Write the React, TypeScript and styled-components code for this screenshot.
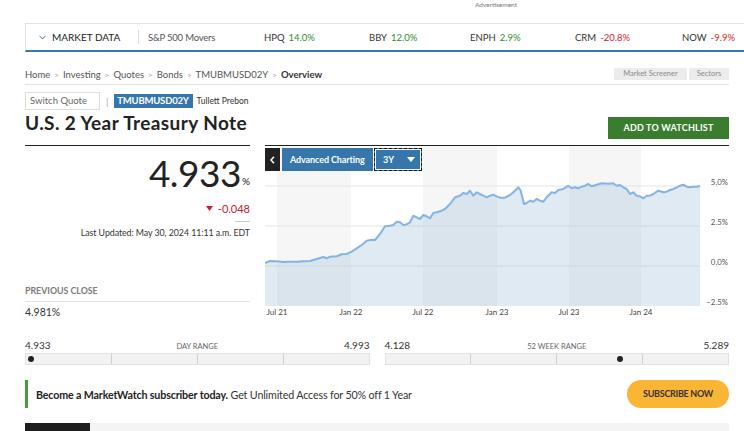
import React from "react";
import styled, { createGlobalStyle } from "styled-components";

const Global = createGlobalStyle`
  html, body { margin: 0; padding: 0; background: #fff; }
  body { font-family: Lato, "Open Sans", Arial, sans-serif; color: #222; overflow: hidden; }
  * { box-sizing: border-box; }
`;

const Page = styled.div`
  width: 744px;
  height: 431px;
  overflow: hidden;
`;

const Ad = styled.div`
  height: 23px;
  padding: 1px 0 0 475px;
  font-size: 6.5px;
  line-height: 8px;
  color: #777;
`;

const MarketBar = styled.div`
  margin-left: 25px;
  height: 29px;
  border-top: 1px solid #e3e3e3;
  border-left: 1px solid #e3e3e3;
  border-bottom: 2px solid #3a77ad;
  display: flex;
  align-items: center;
  padding-left: 13px;
  white-space: nowrap;
  overflow: hidden;
`;

const MarketTitle = styled.div`
  display: flex;
  align-items: center;
  gap: 6px;
  font-size: 10px;
  color: #222;
  width: 99px;
  flex-shrink: 0;
`;

const Divider = styled.div`
  width: 1px;
  height: 14px;
  background: #dcdcdc;
  margin: 0 9px 0 0;
  flex-shrink: 0;
`;

const Movers = styled.div`
  font-size: 9.5px;
  color: #555;
  width: 116px;
  flex-shrink: 0;
  letter-spacing: -0.2px;
`;

const Ticker = styled.div<{ $w: number }>`
  width: ${(p) => p.$w}px;
  flex-shrink: 0;
  font-size: 9.5px;
  color: #333;
`;

const Change = styled.span<{ $up: boolean }>`
  margin-left: 4px;
  color: ${(p) => (p.$up ? "#2f8c2f" : "#d2232a")};
`;

const Main = styled.div`
  margin-left: 25px;
  width: 704px;
`;

const Crumbs = styled.div`
  margin-top: 13px;
  height: 20px;
  border-bottom: 1px solid #e2e2e2;
  display: flex;
  align-items: center;
  justify-content: space-between;
`;

const CrumbTrail = styled.div`
  font-size: 9.5px;
  color: #555;
  display: flex;
  align-items: center;
  gap: 4px;
`;

const Sep = styled.span`
  color: #999;
  font-size: 8px;
`;

const Current = styled.span`
  font-weight: 700;
  color: #333;
`;

const Pills = styled.div`
  display: flex;
  gap: 2px;
  margin-top: -1px;
`;

const Pill = styled.div<{ $w: number }>`
  width: ${(p) => p.$w}px;
  height: 12px;
  background: #ececec;
  color: #8a8a8a;
  font-size: 7.5px;
  line-height: 12px;
  text-align: center;
`;

const QuoteRow = styled.div`
  margin-top: 7px;
  height: 18px;
  display: flex;
  align-items: center;
`;

const SwitchInput = styled.div`
  width: 75px;
  height: 18px;
  border: 1px solid #ddd;
  font-size: 9.5px;
  color: #666;
  line-height: 16px;
  padding-left: 4px;
`;

const Bar = styled.span`
  margin: 0 5px 0 6px;
  color: #aaa;
  font-size: 10px;
`;

const Badge = styled.div`
  height: 14px;
  width: 79px;
  background: #3676ab;
  color: #fff;
  font-weight: 700;
  font-size: 9.5px;
  line-height: 14px;
  text-align: center;
  letter-spacing: -0.2px;
`;

const Exchange = styled.div`
  margin-left: 4px;
  font-size: 8.5px;
  color: #333;
`;

const TitleRow = styled.div`
  display: flex;
  justify-content: space-between;
  align-items: flex-start;
  height: 29px;
`;

const Title = styled.h1`
  margin: 1px 0 0;
  font-size: 19px;
  line-height: 24px;
  font-weight: 700;
  letter-spacing: 0.4px;
  color: #222;
`;

const WatchButton = styled.div`
  margin-top: 7px;
  width: 121px;
  height: 22px;
  background: #3b7d2f;
  color: #fff;
  font-size: 9px;
  font-weight: 700;
  line-height: 22px;
  text-align: center;
  letter-spacing: 0.2px;
`;

const Columns = styled.div`
  margin-top: 6px;
  display: flex;
  gap: 15px;
`;

const LeftCol = styled.div`
  width: 225px;
  border-top: 1px solid #222;
  display: flex;
  flex-direction: column;
  align-items: flex-end;
`;

const Price = styled.div`
  margin-top: 8px;
  font-size: 37px;
  line-height: 37px;
  color: #222;
  letter-spacing: -0.5px;
`;

const Pct = styled.span`
  font-size: 10px;
  letter-spacing: 0;
  margin-left: 1px;
  position: relative;
  top: -2px;
`;

const Delta = styled.div`
  font-size: 11px;
  line-height: 13px;
  color: #c8202b;
  display: flex;
  align-items: center;
  gap: 5px;
`;

const SmallRule = styled.div`
  margin-top: 6px;
  width: 15px;
  height: 1px;
  background: #ccc;
`;

const Updated = styled.div`
  margin-top: 5px;
  font-size: 8.8px;
  line-height: 11px;
  color: #333;
  letter-spacing: -0.05px;
`;

const PrevBlock = styled.div`
  margin-top: auto;
  align-self: stretch;
`;

const PrevLabel = styled.div`
  font-size: 8.8px;
  line-height: 11px;
  color: #666;
  font-weight: 700;
  padding-bottom: 5px;
  border-bottom: 1px solid #ddd;
  opacity: 0.85;
`;

const PrevValue = styled.div`
  margin-top: 4px;
  font-size: 10.5px;
  line-height: 13px;
  color: #333;
`;

const ChartCol = styled.div`
  width: 464px;
  border-top: 1px solid #222;
  position: relative;
`;

const ChartSvg = styled.svg`
  display: block;
`;

const Toolbar = styled.div`
  position: absolute;
  top: 2px;
  left: 0;
  display: flex;
  height: 23px;
  gap: 2px;
`;

const BackBtn = styled.div`
  width: 15px;
  background: #222;
  display: flex;
  align-items: center;
  justify-content: center;
`;

const AdvBtn = styled.div`
  width: 91px;
  background: #3676ab;
  color: #fff;
  font-size: 9px;
  font-weight: 700;
  line-height: 23px;
  padding-left: 8px;
  letter-spacing: -0.1px;
`;

const RangeBtn = styled.div`
  width: 48px;
  margin-left: -1px;
  background: #3676ab;
  border: 1px dashed #111;
  outline: 1px solid #fff;
  outline-offset: -2px;
  color: #fff;
  font-size: 9px;
  font-weight: 700;
  display: flex;
  align-items: center;
  justify-content: space-between;
  padding: 0 6px 0 8px;
`;

const Ranges = styled.div`
  margin-top: 20px;
  display: flex;
  gap: 15px;
`;

const RangeBox = styled.div`
  flex: 1;
`;

const RangeHead = styled.div`
  display: flex;
  justify-content: space-between;
  align-items: baseline;
  height: 12px;
  font-size: 10px;
  line-height: 12px;
  color: #333;
`;

const RangeLabel = styled.span`
  font-size: 7.5px;
  color: #666;
`;

const Track = styled.div`
  margin-top: 2px;
  height: 12px;
  display: flex;
  border: 1px solid #e2e2e2;
  background: #f2f2f2;
  position: relative;
`;

const Seg = styled.div`
  flex: 1;
  & + & { border-left: 1px solid #cfcfcf; }
`;

const Dot = styled.div`
  position: absolute;
  top: 2px;
  width: 6px;
  height: 6px;
  margin-left: -3px;
  border-radius: 50%;
  background: #222;
`;

const Banner = styled.div`
  margin-top: 15px;
  height: 28px;
  display: flex;
  align-items: center;
  justify-content: space-between;
  border-left: 3px solid #4a9d3d;
  padding-left: 8px;
`;

const BannerText = styled.div`
  font-size: 10.7px;
  color: #333;
  letter-spacing: -0.15px;
`;

const Strong = styled.span`
  font-weight: 700;
  color: #222;
`;

const SubscribeBtn = styled.div`
  width: 102px;
  height: 28px;
  border-radius: 14px;
  background: #fbb535;
  color: #333;
  font-size: 9px;
  line-height: 28px;
  text-align: center;
  letter-spacing: -0.3px;
  font-weight: 700;
`;

const Footer = styled.div`
  margin-top: 15px;
  height: 20px;
  display: flex;
  background: #f4f4f4;
`;

const FooterTab = styled.div`
  width: 65px;
  background: #1e1e1e;
`;

const RAW: [number, number][] = [
  [15, 372], [30, 366], [50, 367], [70, 369], [90, 368], [110, 368], [130, 367], [150, 366],
  [170, 360], [190, 354], [200, 358], [210, 353], [230, 352], [245, 346], [260, 345], [275, 338],
  [290, 328], [305, 318], [320, 305], [335, 302], [345, 303], [360, 285], [375, 262], [390, 260],
  [400, 258], [410, 248], [420, 250], [430, 258], [440, 256], [450, 250], [460, 230], [470, 235],
  [480, 240], [490, 228], [500, 232], [510, 238], [520, 222], [530, 220], [545, 215], [555, 210],
  [570, 195], [585, 175], [600, 170], [610, 162], [620, 165], [630, 155], [640, 170], [650, 160],
  [660, 165], [670, 170], [680, 175], [690, 170], [700, 167], [710, 172], [720, 176], [735, 176],
  [750, 168], [760, 160], [770, 150], [775, 145], [782, 155], [792, 195], [800, 192], [810, 185],
  [820, 188], [830, 180], [840, 185], [850, 188], [860, 175], [875, 160], [885, 162], [895, 153],
  [910, 150], [925, 140], [935, 148], [945, 145], [955, 148], [965, 143], [975, 140], [985, 135],
  [995, 142], [1010, 137], [1025, 133], [1045, 134], [1060, 133], [1070, 140], [1080, 138],
  [1090, 145], [1100, 150], [1110, 165], [1120, 160], [1130, 170], [1140, 172], [1150, 178],
  [1160, 170], [1170, 170], [1180, 165], [1195, 155], [1210, 160], [1220, 158], [1230, 153],
  [1240, 150], [1250, 145], [1260, 140], [1270, 137], [1280, 143], [1290, 145], [1300, 143],
  [1310, 143], [1320, 141],
];

const PTS = RAW.map(([x, y]) => [x / 3 - 5, y / 3 - 7] as [number, number]);
const LINE = PTS.map(([x, y], i) => `${i ? "L" : "M"}${x.toFixed(1)},${y.toFixed(1)}`).join(" ");
const BOTTOM = 160;
const AREA = `${LINE} L${PTS[PTS.length - 1][0].toFixed(1)},${BOTTOM} L0,${BOTTOM} Z`;

const BANDS = [
  [12, 86],
  [158, 232],
  [304, 376],
];
const XLABELS: [number, string][] = [
  [12, "Jul 21"],
  [86, "Jan 22"],
  [158, "Jul 22"],
  [232, "Jan 23"],
  [304, "Jul 23"],
  [376, "Jan 24"],
];
const YLABELS: [number, string][] = [
  [40, "5.0%"],
  [80, "2.5%"],
  [120, "0.0%"],
  [160, "\u22122.5%"],
];

function Chart() {
  return (
    <ChartSvg width={464} height={173} viewBox="0 0 464 173">
      {BANDS.map(([a, b]) => (
        <rect key={a} x={a} y={0} width={b - a} height={BOTTOM} fill="#f6f6f6" />
      ))}
      {YLABELS.slice(0, 3).map(([y]) => (
        <line key={y} x1={0} x2={435} y1={y} y2={y} stroke="#e4e4e4" strokeWidth={1} />
      ))}
      <path d={AREA} fill="rgba(165,195,218,0.35)" />
      <path d={LINE} fill="none" stroke="#85b4e4" strokeWidth={2} strokeLinejoin="round" />
      {YLABELS.map(([y, t]) => (
        <text key={t} x={463} y={y - 1.5} textAnchor="end" fontSize={7.8} fill="#555" fontFamily="Lato, sans-serif">
          {t}
        </text>
      ))}
      {XLABELS.map(([x, t]) => (
        <text key={t} x={x} y={169} textAnchor="middle" fontSize={8} fill="#444" fontFamily="Lato, sans-serif">
          {t}
        </text>
      ))}
    </ChartSvg>
  );
}

function RangeBar({ low, high, value, label }: { low: string; high: string; value: number; label: string }) {
  const pct = (value - parseFloat(low)) / (parseFloat(high) - parseFloat(low));
  return (
    <RangeBox>
      <RangeHead>
        <span>{low}</span>
        <RangeLabel>{label}</RangeLabel>
        <span>{high}</span>
      </RangeHead>
      <Track>
        <Seg />
        <Seg />
        <Seg />
        <Seg />
        <Dot style={{ left: `calc(${(pct * 100).toFixed(2)}% * 0.965 + 5px)` }} />
      </Track>
    </RangeBox>
  );
}

const TICKERS = [
  { s: "HPQ", c: "14.0%", up: true, w: 105 },
  { s: "BBY", c: "12.0%", up: true, w: 101 },
  { s: "ENPH", c: "2.9%", up: true, w: 105 },
  { s: "CRM", c: "-20.8%", up: false, w: 107 },
  { s: "NOW", c: "-9.9%", up: false, w: 80 },
];

export default function App() {
  return (
    <Page>
      <Global />
      <Ad>Advertisement</Ad>
      <MarketBar>
        <MarketTitle>
          <svg width="7" height="5" viewBox="0 0 7 5">
            <path d="M0.5 0.8 L3.5 4 L6.5 0.8" fill="none" stroke="#3a77ad" strokeWidth="1" />
          </svg>
          MARKET DATA
        </MarketTitle>
        <Divider />
        <Movers>S&amp;P 500 Movers</Movers>
        {TICKERS.map((t) => (
          <Ticker key={t.s} $w={t.w}>
            {t.s}
            <Change $up={t.up}>{t.c}</Change>
          </Ticker>
        ))}
      </MarketBar>
      <Main>
        <Crumbs>
          <CrumbTrail>
            <span>Home</span>
            <Sep>&gt;</Sep>
            <span>Investing</span>
            <Sep>&gt;</Sep>
            <span>Quotes</span>
            <Sep>&gt;</Sep>
            <span>Bonds</span>
            <Sep>&gt;</Sep>
            <span>TMUBMUSD02Y</span>
            <Sep>&gt;</Sep>
            <Current>Overview</Current>
          </CrumbTrail>
          <Pills>
            <Pill $w={73}>Market Screener</Pill>
            <Pill $w={40}>Sectors</Pill>
          </Pills>
        </Crumbs>
        <QuoteRow>
          <SwitchInput>Switch Quote</SwitchInput>
          <Bar>|</Bar>
          <Badge>TMUBMUSD02Y</Badge>
          <Exchange>Tullett Prebon</Exchange>
        </QuoteRow>
        <TitleRow>
          <Title>U.S. 2 Year Treasury Note</Title>
          <WatchButton>ADD TO WATCHLIST</WatchButton>
        </TitleRow>
        <Columns>
          <LeftCol>
            <Price>
              4.933<Pct>%</Pct>
            </Price>
            <Delta>
              <svg width="7" height="5" viewBox="0 0 7 5">
                <path d="M0 0 H7 L3.5 5 Z" fill="#c8202b" />
              </svg>
              -0.048
            </Delta>
            <SmallRule />
            <Updated>Last Updated: May 30, 2024 11:11 a.m. EDT</Updated>
            <PrevBlock>
              <PrevLabel>PREVIOUS CLOSE</PrevLabel>
              <PrevValue>4.981%</PrevValue>
            </PrevBlock>
          </LeftCol>
          <ChartCol>
            <Chart />
            <Toolbar>
              <BackBtn>
                <svg width="5" height="8" viewBox="0 0 5 8">
                  <path d="M4 0.8 L1 4 L4 7.2" fill="none" stroke="#fff" strokeWidth="1.5" />
                </svg>
              </BackBtn>
              <AdvBtn>Advanced Charting</AdvBtn>
              <RangeBtn>
                3Y
                <svg width="8" height="5" viewBox="0 0 8 5">
                  <path d="M0 0 H8 L4 5 Z" fill="#fff" />
                </svg>
              </RangeBtn>
            </Toolbar>
          </ChartCol>
        </Columns>
        <Ranges>
          <RangeBar low="4.933" high="4.993" value={4.933} label="DAY RANGE" />
          <RangeBar low="4.128" high="5.289" value={4.933} label="52 WEEK RANGE" />
        </Ranges>
        <Banner>
          <BannerText>
            <Strong>Become a MarketWatch subscriber today.</Strong> Get Unlimited Access for 50% off 1 Year
          </BannerText>
          <SubscribeBtn>SUBSCRIBE NOW</SubscribeBtn>
        </Banner>
        <Footer>
          <FooterTab />
        </Footer>
      </Main>
    </Page>
  );
}
